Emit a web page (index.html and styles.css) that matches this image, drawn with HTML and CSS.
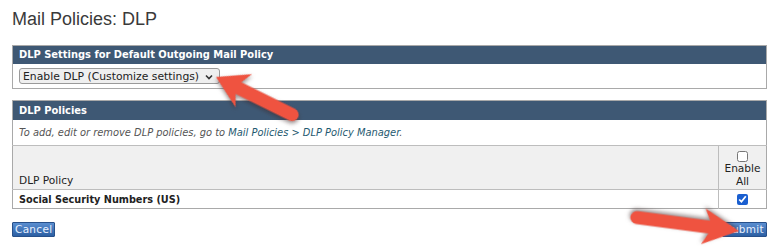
FILE: index.html
```html
<!DOCTYPE html>
<html>
<head>
<meta charset="utf-8">
<link rel="stylesheet" href="styles.css">
</head>
<body>
<div class="page">
  <h1 class="title">Mail Policies: DLP</h1>

  <div class="panel">
    <div class="panel-head">DLP Settings for Default Outgoing Mail Policy</div>
    <div class="panel-row">
      <div class="select">
        <span>Enable DLP (Customize settings)</span>
        <svg class="chev" width="8" height="6" viewBox="0 0 8 6"><path d="M1 1.5 L4 4.5 L7 1.5" fill="none" stroke="#333" stroke-width="1.6"/></svg>
      </div>
    </div>
  </div>

  <table class="panel policies">
    <tr><th colspan="2" class="panel-head">DLP Policies</th></tr>
    <tr><td colspan="2" class="note">To add, edit or remove DLP policies, go to <span class="link">Mail Policies &gt; DLP Policy Manager</span>.</td></tr>
    <tr class="colhead">
      <td class="name-col">DLP Policy</td>
      <td class="en-col"><input type="checkbox" class="cb"><div>Enable<br>All</div></td>
    </tr>
    <tr class="data">
      <td class="name-col bold">Social Security Numbers (US)</td>
      <td class="en-col"><input type="checkbox" class="cb" checked></td>
    </tr>
  </table>

  <div class="actions">
    <button class="btn">Cancel</button>
    <button class="btn">Submit</button>
  </div>
</div>

<svg class="overlay" width="773" height="248" viewBox="0 0 773 248">
  <g class="arrow" transform="translate(216,77) rotate(26.3)">
    <path d="M0 0 L31 -18.5 L25 -6.5 L85 -6.5 A6.5 6.5 0 0 1 85 6.5 L25 6.5 L31 18.5 Z"/>
  </g>
  <g class="arrow" transform="translate(739,231) rotate(187.5)">
    <path d="M0 0 L36 -18 L30 -6.5 L103 -6.5 A6.5 6.5 0 0 1 103 6.5 L30 6.5 L36 18 Z"/>
  </g>
</svg>
</body>
</html>
```

FILE: styles.css
```css
html, body {
  margin: 0;
  padding: 0;
  background: #ffffff;
}
.page {
  padding: 9px 6px 0 12px;
  font-family: "DejaVu Sans", Verdana, sans-serif;
  font-size: 11px;
  color: #222;
}
.title {
  margin: 0;
  font-family: "Liberation Sans", Arial, sans-serif;
  font-weight: normal;
  font-size: 18px;
  line-height: 20px;
  color: #3a3a3a;
  height: 36px;
}
.panel {
  border: 1px solid #a9a9a9;
  background: #fff;
}
.panel-head {
  background: #3e5874;
  color: #fff;
  font-family: "DejaVu Sans Condensed", "DejaVu Sans", sans-serif;
  font-weight: bold;
  font-size: 11px;
  height: 18px;
  line-height: 18px;
  padding: 0 0 0 6px;
  text-align: left;
}
.panel-row {
  height: 24px;
  display: flex;
  align-items: center;
  padding-left: 6px;
}
.select {
  height: 14px;
  border: 1px solid #9a9a9a;
  border-radius: 3px;
  background: #efefef;
  display: flex;
  align-items: center;
  justify-content: space-between;
  padding: 0 6px 0 3px;
  box-sizing: content-box;
  font-size: 10.8px;
  color: #222;
  width: 190px;
}
.chev { margin-top: 1px; }
.policies {
  margin-top: 11px;
  width: 100%;
  border-collapse: collapse;
  box-sizing: border-box;
}
.policies td, .policies th {
  padding: 0;
}
.policies .panel-head {
  height: 19px;
  padding-left: 6px;
}
.note {
  height: 25px;
  padding-left: 6px !important;
  font-style: italic;
  font-size: 9.9px;
  color: #555;
  border-bottom: 1px solid #bdbdbd;
}
.link { color: #1f5a70; }
.colhead td {
  background: #f0f0f0;
  height: 40px;
  border-bottom: 1px solid #bdbdbd;
  vertical-align: bottom;
}
.name-col {
  padding-left: 6px !important;
  font-size: 10.6px;
}
.colhead .name-col { padding-bottom: 3px !important; }
.en-col {
  width: 47px;
  border-left: 1px solid #bdbdbd;
  text-align: center;
  font-size: 10.6px;
  line-height: 13px;
}
.colhead .en-col { padding-bottom: 1px !important; }
.data td {
  height: 18px;
  vertical-align: middle;
}
.bold {
  font-family: "DejaVu Sans Condensed", "DejaVu Sans", sans-serif;
  font-weight: bold;
  font-size: 10.8px;
}
.cb {
  margin: 0;
  width: 11px;
  height: 11px;
  accent-color: #1a5fd0;
  vertical-align: middle;
}
.colhead .cb { display: block; margin: 3px auto 0; }
.actions {
  margin-top: 13px;
  display: flex;
  justify-content: space-between;
}
.btn {
  font-family: "DejaVu Sans", Verdana, sans-serif;
  font-size: 10.5px;
  letter-spacing: 0.3px;
  color: #e8f1ff;
  height: 15px;
  line-height: 13px;
  padding: 0 2px;
  border: 1px solid #27508a;
  border-radius: 1px;
  background: linear-gradient(#5a8ed0, #2c5fa3);
}
.overlay {
  position: absolute;
  left: 0;
  top: 0;
  pointer-events: none;
}
.arrow path {
  fill: #ef5340;
  filter: drop-shadow(1px 2px 2px rgba(60, 40, 40, 0.55));
}
```
